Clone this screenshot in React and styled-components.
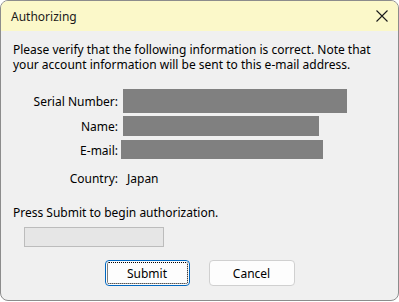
import React from "react";
import styled, { createGlobalStyle } from "styled-components";

const Global = createGlobalStyle`
  html, body { margin: 0; padding: 0; background: #ffffff; }
  body { font-family: "Noto Sans", "Open Sans", sans-serif; font-size: 12px; color: #000; }
  * { box-sizing: border-box; }
`;

const Window = styled.div`
  width: 399px;
  height: 301px;
  border: 1px solid #8c8c8c;
  border-radius: 8px;
  overflow: hidden;
  display: flex;
  flex-direction: column;
  background: #f0f0f0;
`;

const TitleBar = styled.div`
  height: 30px;
  flex: none;
  background: #fbf8c9;
  display: flex;
  align-items: center;
  justify-content: space-between;
  padding: 0 9px 0 10px;
`;

const Title = styled.span`
  font-size: 12px;
  color: #1a1a1a;
`;

const CloseButton = styled.div`
  width: 14px;
  height: 14px;
  display: flex;
  align-items: center;
  justify-content: center;
`;

const Body = styled.div`
  flex: 1;
  padding: 11px 12px 0 12px;
`;

const Text = styled.p`
  margin: ${(p) => p.$margin || "0"};
  line-height: 15px;
  font-size: 12px;
`;

const Form = styled.div`
  margin-top: 17px;
  display: grid;
  grid-template-columns: 105px 1fr;
  column-gap: 5px;
  grid-template-rows: 24px 20px 20px 32px;
  row-gap: 3px;
`;

const Label = styled.div`
  text-align: right;
  align-self: center;
  line-height: 15px;
  margin-top: ${(p) => p.$top || 0}px;
`;

const Redacted = styled.div`
  background: #808080;
  width: ${(p) => p.$width}px;
  height: ${(p) => p.$height}px;
  margin-left: ${(p) => p.$shift || 0}px;
  margin-top: ${(p) => p.$top || 0}px;
`;

const Value = styled.div`
  align-self: center;
  line-height: 15px;
  padding-left: 4px;
`;

const Progress = styled.div`
  margin: 7px 0 0 11px;
  width: 140px;
  height: 20px;
  border: 1px solid #bcbcbc;
  background: #e6e6e6;
`;

const ButtonRow = styled.div`
  margin-top: 13px;
  display: flex;
  justify-content: center;
  gap: 19px;
`;

const Button = styled.button`
  width: ${(p) => p.$width}px;
  height: 26px;
  font-family: inherit;
  font-size: 12px;
  color: #000;
  background: #fdfdfd;
  border: 1px solid ${(p) => (p.$default ? "#0067c0" : "#d0d0d0")};
  border-radius: 4px;
  outline: ${(p) => (p.$default ? "1px dotted #000" : "none")};
  outline-offset: -3px;
  padding: 0;
`;

export default function App() {
  return (
    <>
      <Global />
      <Window>
        <TitleBar>
          <Title>Authorizing</Title>
          <CloseButton>
            <svg width="12" height="12" viewBox="0 0 12 12">
              <path d="M0.5 0.5 L11.5 11.5 M11.5 0.5 L0.5 11.5" stroke="#1a1a1a" strokeWidth="1.1" fill="none" />
            </svg>
          </CloseButton>
        </TitleBar>
        <Body>
          <Text>
            Please verify that the following information is correct. Note that
            <br />
            your account information will be sent to this e-mail address.
          </Text>
          <Form>
            <Label>Serial Number:</Label>
            <Redacted $width={224} $height={24} />
            <Label>Name:</Label>
            <Redacted $width={196} $height={20} />
            <Label $top={2}>E-mail:</Label>
            <Redacted $width={202} $height={19} $shift={-2} $top={1} />
            <Label>Country:</Label>
            <Value>Japan</Value>
          </Form>
          <Text $margin="11px 0 0 0">Press Submit to begin authorization.</Text>
          <Progress />
          <ButtonRow>
            <Button $width={85} $default>Submit</Button>
            <Button $width={86}>Cancel</Button>
          </ButtonRow>
        </Body>
      </Window>
    </>
  );
}
